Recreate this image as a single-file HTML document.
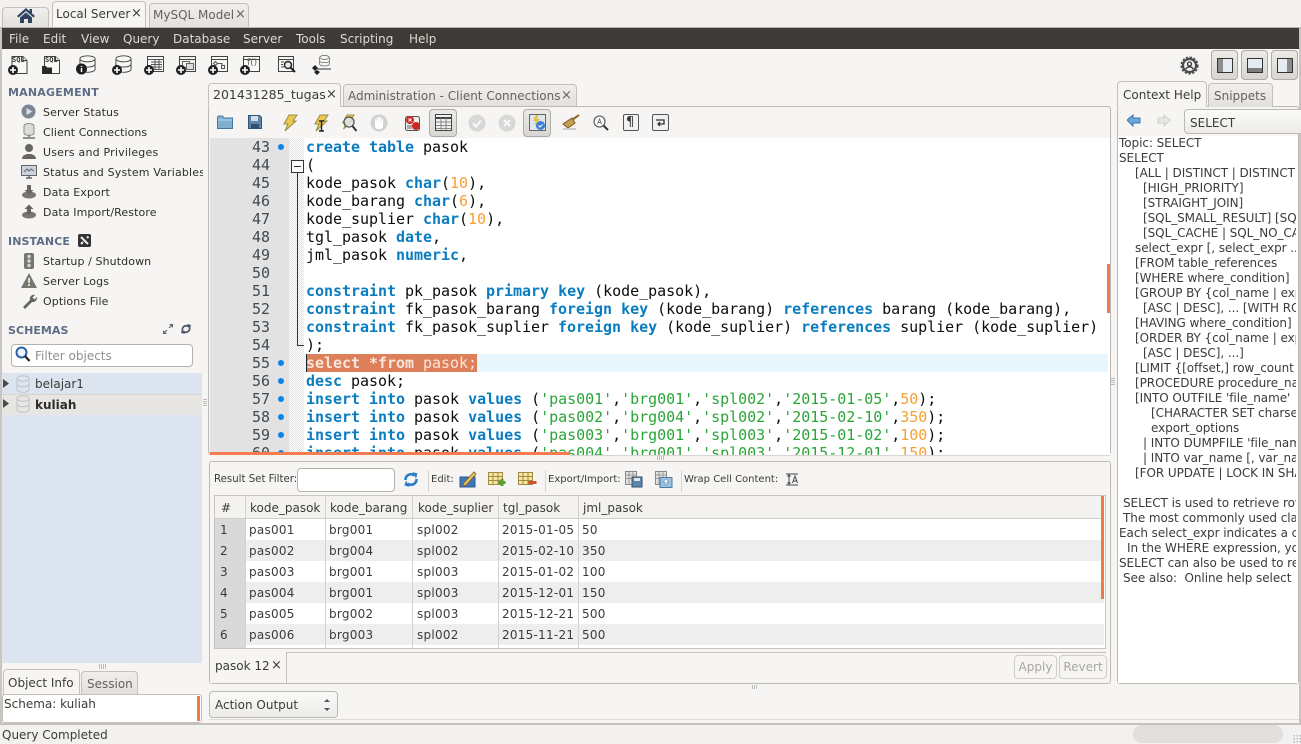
<!DOCTYPE html>
<html><head><meta charset="utf-8"><title>MySQL Workbench</title>
<style>
html,body{margin:0;padding:0;width:1301px;height:744px;overflow:hidden;background:#f2f1f0}
body{position:relative;font-family:"DejaVu Sans","Liberation Sans",sans-serif;font-size:12px;color:#3c3b37}
.a,.t,svg{position:absolute}
.t{white-space:pre;line-height:16px;height:16px}
.s{font-size:11px;letter-spacing:.1px;color:#2e2d2a;margin-top:1px}
.h{font-size:11px;font-weight:bold;color:#5d6d85}
.l{font-size:10px}
.tab{position:absolute;box-sizing:border-box;border:1px solid #c4c1bb;border-bottom:none;border-radius:4px 4px 0 0;background:linear-gradient(#f0efed,#e2e0dd)}
.tab.on{background:#f6f5f4}
.box{position:absolute;box-sizing:border-box;border:1px solid #bdbab4;border-radius:3px;background:#f6f5f4}
.tb{position:absolute;box-sizing:border-box;border:1px solid #aeaba5;border-radius:4px;background:linear-gradient(#eceae7,#d8d6d2)}
.c{position:absolute;left:306px;font:15px/18px "DejaVu Sans Mono","Liberation Mono",monospace;letter-spacing:-.03px;color:#0c0c0c;white-space:pre;height:18px}
.n{position:absolute;left:230px;width:40px;text-align:right;font:15px/18px "DejaVu Sans Mono","Liberation Mono",monospace;color:#3f4a52;height:18px}
.d{position:absolute;left:278px;width:6px;height:6px;border-radius:50%;background:#0a84e6}
.c b{color:#0a7cc0;font-weight:bold}.c i{font-style:normal;color:#f7a030}.c u{text-decoration:none;color:#2aa538}
.r{position:absolute;left:215px;width:889px;height:21px;background:#eee}
.g{position:absolute;white-space:pre;font-size:12px;color:#3c3b37;line-height:16px;letter-spacing:.25px}
.gh{letter-spacing:0}
.vl{position:absolute;width:1px;top:496px;height:152px;background:#d3d1cd}
.p{position:absolute;white-space:pre;font-size:12px;letter-spacing:-.06px;line-height:15px;height:15px;color:#3c3b37}
</style></head><body>
<svg width="0" height="0" style="position:absolute"><defs>
<symbol id="plus" viewBox="0 0 10 10"><circle cx="5" cy="5" r="5" fill="#1f1f1f"/><path d="M5 2v6M2 5h6" stroke="#fff" stroke-width="1.6"/></symbol>
<symbol id="doc" viewBox="0 0 20 20"><path d="M3.5 1.5h11l4 4v13h-15z" fill="#f8f8f6" stroke="#45443f"/><path d="M14.500 1.500v4h4" fill="#ddd" stroke="#45443f"/></symbol>
<symbol id="db" viewBox="0 0 18 20"><ellipse cx="9" cy="4" rx="8" ry="3.200" fill="#f5f5f3" stroke="#45443f"/><path d="M1 4v11c0 2 3.500 3.300 8 3.300s8-1.300 8-3.300V4M1 9.500c0 2 3.500 3.200 8 3.200s8-1.200 8-3.200" fill="none" stroke="#45443f"/></symbol>
<symbol id="bolt" viewBox="0 0 17 18"><path d="M8 1h8l-4 6h3L4 17l3-7H3z" fill="#edc84c" stroke="#9a8a4c"/></symbol>
<symbol id="cyl" viewBox="0 0 14 18"><ellipse cx="7" cy="3.500" rx="6" ry="2.800" fill="none" stroke="#bfc3c8"/><path d="M1 3.500v11c0 1.600 2.700 2.800 6 2.800s6-1.200 6-2.800v-11M1 9c0 1.600 2.700 2.800 6 2.800S13 10.600 13 9" fill="none" stroke="#bfc3c8"/></symbol>
</defs></svg>

<!-- top tabs -->
<div class="tab" style="left:2px;top:7px;width:47px;height:21px"></div>
<svg style="left:16px;top:7px" width="20" height="17" viewBox="0 0 20 17"><path d="M10 1L1 9l1.500 1.500L10 4l7.500 6.500L19 9l-3-2.600V2h-2.500v2.200z" fill="#2f4460"/><path d="M4 10.500L10 5.500l6 5V16h-4v-4H8v4H4z" fill="#2f4460"/></svg>
<div class="tab on" style="left:52px;top:1px;width:94px;height:27px"></div>
<div class="t" style="left:56px;top:6px;font-size:12px">Local Server</div>
<div class="t" style="left:131px;top:6px;font-size:13px">×</div>
<div class="tab" style="left:149px;top:3px;width:100px;height:25px"></div>
<div class="t" style="left:153px;top:7px;font-size:12px;color:#64625e">MySQL Model</div>
<div class="t" style="left:235px;top:7px;font-size:13px;color:#64625e">×</div>

<!-- menu -->
<div class="a" style="left:0;top:27px;width:1301px;height:1px;background:#b8b5b0"></div>
<div class="a" style="left:2px;top:28px;width:1297px;height:21px;background:#3c3b37"></div>
<div class="a" style="left:0;top:28px;width:2px;height:716px;background:#c9c6c1"></div>
<div class="a" style="left:1299px;top:28px;width:2px;height:697px;background:#c9c6c1"></div>
<div class="a" style="left:2px;top:49px;width:1297px;height:675px;background:#f6f5f4"></div>
<div class="t" style="left:9px;top:31px;color:#dfdbd2">File</div>
<div class="t" style="left:43px;top:31px;color:#dfdbd2">Edit</div>
<div class="t" style="left:81px;top:31px;color:#dfdbd2">View</div>
<div class="t" style="left:123px;top:31px;color:#dfdbd2">Query</div>
<div class="t" style="left:173px;top:31px;color:#dfdbd2">Database</div>
<div class="t" style="left:243px;top:31px;color:#dfdbd2">Server</div>
<div class="t" style="left:296px;top:31px;color:#dfdbd2">Tools</div>
<div class="t" style="left:340px;top:31px;color:#dfdbd2">Scripting</div>
<div class="t" style="left:409px;top:31px;color:#dfdbd2">Help</div>

<!-- main toolbar -->
<svg style="left:8px;top:55px" width="21" height="20"><use href="#doc" width="21" height="20"/><use href="#plus" x="0" y="10" width="10" height="10"/></svg>
<div class="t" style="left:12px;top:56px;height:8px;font:bold 7px/8px 'DejaVu Sans Mono',monospace;color:#333">SQL</div>
<svg style="left:41px;top:55px" width="20" height="20"><use href="#doc" width="20" height="20"/><path d="M1 11h4l1 1.500h5V19H1z" fill="#2a2a28"/></svg>
<div class="t" style="left:45px;top:56px;height:8px;font:bold 7px/8px 'DejaVu Sans Mono',monospace;color:#333">SQL</div>
<svg style="left:76px;top:55px" width="20" height="20"><use href="#db" x="3" width="17" height="19"/><circle cx="5.500" cy="14" r="5.500" fill="#1f1f1f"/><path d="M5.500 11v1M5.500 13v4" stroke="#fff" stroke-width="1.500"/></svg>
<svg style="left:112px;top:55px" width="20" height="20"><use href="#db" x="3" width="17" height="19"/><use href="#plus" y="10" width="10" height="10"/></svg>
<svg style="left:144px;top:55px" width="20" height="20"><rect x="3.500" y="1.500" width="16" height="15" fill="#f8f8f6" stroke="#45443f"/><path d="M3.500 4.500h16M7 7h11M7 9.500h11M7 12h11M7 14.500h11M11 5v10M15 5v10" stroke="#555" fill="none"/><use href="#plus" y="10" width="10" height="10"/></svg>
<svg style="left:176px;top:55px" width="20" height="20"><rect x="3.500" y="1.500" width="16" height="15" fill="#f0f0ee" stroke="#45443f"/><path d="M3.500 4.500h16" stroke="#45443f"/><rect x="6.500" y="6.500" width="7" height="6" fill="none" stroke="#666"/><rect x="10.500" y="8.500" width="7" height="6" fill="#ddd" stroke="#666"/><use href="#plus" y="10" width="10" height="10"/></svg>
<svg style="left:208px;top:55px" width="20" height="20"><rect x="3.500" y="1.500" width="16" height="15" fill="#f8f8f6" stroke="#45443f"/><path d="M3.500 4.500h16" stroke="#45443f"/><path d="M7.500 6.500l2 2-2 2-2-2zM13.500 10.500h3v3h-3zM10 8.500h4v2" fill="none" stroke="#555"/><use href="#plus" y="10" width="10" height="10"/></svg>
<svg style="left:240px;top:55px" width="20" height="20"><rect x="3.500" y="1.500" width="16" height="15" fill="#f8f8f6" stroke="#45443f"/><path d="M3.500 4.500h16" stroke="#45443f"/><use href="#plus" y="10" width="10" height="10"/></svg>
<div class="t" style="left:247px;top:57px;font-size:9px;line-height:12px;color:#666">f()</div>
<svg style="left:277px;top:55px" width="20" height="20"><rect x="1.500" y="1.500" width="15" height="15" fill="#f8f8f6" stroke="#45443f"/><path d="M1.500 4.500h15M4 7h3M4 9.500h2M4 12h3" stroke="#45443f"/><circle cx="11" cy="10" r="3.500" fill="#dfe8f2" stroke="#222" stroke-width="1.500"/><path d="M13.500 12.500L18 17" stroke="#222" stroke-width="2"/></svg>
<svg style="left:311px;top:55px" width="21" height="20"><use href="#db" x="8" width="11" height="12"/><path d="M6 14h14" stroke="#333"/><path d="M1 13l3-3 3 3-3 3zM6 15l3 2-3 3-3-3z" fill="#222"/></svg>

<!-- right top icons -->
<svg style="left:1180px;top:56px" width="19" height="19" viewBox="0 0 19 19"><circle cx="9.500" cy="9.500" r="7.600" fill="#4a4a48"/><circle cx="9.500" cy="9.500" r="8.300" fill="none" stroke="#4a4a48" stroke-width="1.500" stroke-dasharray="2.400 1.500"/><circle cx="9.500" cy="9.500" r="5.400" fill="#f2f1f0"/><circle cx="9.500" cy="8" r="2" fill="none" stroke="#333" stroke-width="1.300"/><path d="M5.800 13.200c.8-1.800 2.300-2.400 3.700-2.400s2.900.6 3.700 2.400" fill="none" stroke="#333" stroke-width="1.300"/></svg>
<div class="tb" style="left:1211px;top:50px;width:27px;height:30px"></div>
<svg style="left:1217px;top:58px" width="16" height="15"><rect x=".5" y=".5" width="15" height="14" fill="#e6ebf2" stroke="#333"/><rect x="1" y="1" width="5" height="13" fill="#8d8d8b"/></svg>
<div class="tb" style="left:1241px;top:50px;width:27px;height:30px"></div>
<svg style="left:1247px;top:58px" width="16" height="15"><rect x=".5" y=".5" width="15" height="14" fill="#e6ebf2" stroke="#333"/><rect x="1" y="10" width="14" height="4" fill="#7d7d7b"/></svg>
<div class="tb" style="left:1271px;top:50px;width:27px;height:30px"></div>
<svg style="left:1277px;top:58px" width="16" height="15"><rect x=".5" y=".5" width="15" height="14" fill="#e6ebf2" stroke="#333"/><rect x="10" y="1" width="5" height="13" fill="#8d8d8b"/></svg>

<!-- sidebar -->
<div class="t h" style="left:8px;top:85px;letter-spacing:.2px">MANAGEMENT</div>
<svg style="left:21px;top:104px" width="15" height="15"><circle cx="7.500" cy="7.500" r="7" fill="#7b8794"/><path d="M5.500 4v7l6-3.500z" fill="#d9dee3"/></svg>
<div class="t s" style="left:43px;top:104px">Server Status</div>
<svg style="left:22px;top:123px" width="14" height="17"><ellipse cx="7" cy="3" rx="5" ry="2.500" fill="#dcdcda" stroke="#8a8a88"/><path d="M2 3v7c0 1.400 2.200 2.400 5 2.400s5-1 5-2.400V3" fill="#dcdcda" stroke="#8a8a88"/><path d="M7 12v2M1 15h12" stroke="#6e6e6c" stroke-width="1.500"/></svg>
<div class="t s" style="left:43px;top:124px;letter-spacing:.05px">Client Connections</div>
<svg style="left:21px;top:143px" width="16" height="16"><circle cx="8" cy="5" r="4" fill="#66655f"/><path d="M1 16c0-3 2-4 5-5h4c3 1 5 2 5 5z" fill="#66655f"/></svg>
<div class="t s" style="left:43px;top:144px;letter-spacing:.2px">Users and Privileges</div>
<svg style="left:21px;top:165px" width="16" height="14"><rect x=".5" y=".5" width="15" height="10" fill="#c9d3df" stroke="#666"/><path d="M3 7l3-3 2 2 2-2 3 2" fill="none" stroke="#666"/><path d="M5 13h6M8 10v3" stroke="#666" stroke-width="1.500"/></svg>
<div class="t s" style="left:43px;top:164px;width:160px;overflow:hidden;letter-spacing:.17px">Status and System Variables</div>
<svg style="left:21px;top:184px" width="16" height="15"><ellipse cx="8" cy="11" rx="7" ry="3.500" fill="#77766f"/><path d="M6 1h4v5h2.500L8 10.500 3.500 6H6z" fill="#66655f"/></svg>
<div class="t s" style="left:43px;top:184px">Data Export</div>
<svg style="left:21px;top:204px" width="16" height="15"><ellipse cx="8" cy="11" rx="7" ry="3.500" fill="#77766f"/><path d="M6 10V5H3.500L8 .5 12.500 5H10v5z" fill="#66655f"/></svg>
<div class="t s" style="left:43px;top:204px">Data Import/Restore</div>

<div class="t h" style="left:8px;top:234px;letter-spacing:.1px">INSTANCE</div>
<svg style="left:78px;top:234px" width="13" height="13"><rect width="13" height="13" rx="2" fill="#333"/><path d="M3 3l7 7M9 2.500l1.500 1.500M3 10l2-2" stroke="#eee" stroke-width="2"/></svg>
<svg style="left:24px;top:253px" width="10" height="16"><rect width="10" height="16" rx="2" fill="#77766f"/><circle cx="5" cy="3.500" r="1.700" fill="#d6d6d4"/><circle cx="5" cy="8" r="1.700" fill="#d6d6d4"/><circle cx="5" cy="12.500" r="1.700" fill="#d6d6d4"/></svg>
<div class="t s" style="left:43px;top:253px">Startup / Shutdown</div>
<svg style="left:21px;top:273px" width="16" height="15"><path d="M8 0l8 15H0z" fill="#77766f"/><path d="M8 5v5M8 11v2" stroke="#f4f4f2" stroke-width="1.700"/></svg>
<div class="t s" style="left:43px;top:273px">Server Logs</div>
<svg style="left:21px;top:293px" width="16" height="16"><path d="M2 14l7-7c-1-3 2-6 5-5l-2.500 2.500 2 2L16 4c.5 3-2 5.500-5 5l-7 7z" fill="#66655f"/></svg>
<div class="t s" style="left:43px;top:293px">Options File</div>

<div class="t h" style="left:8px;top:323px;letter-spacing:.05px">SCHEMAS</div>
<svg style="left:163px;top:324px" width="10" height="10"><path d="M1 9l3-3M9 1L6 4" stroke="#667" stroke-width="1.200"/><path d="M0 10V6l4 4zM10 0v4L6 0z" fill="#667"/></svg>
<svg style="left:180px;top:324px" width="12" height="10"><path d="M2.500 6.500A3.800 3.800 0 0 1 9 3M9.500 3.500A3.800 3.800 0 0 1 3 7" fill="none" stroke="#4d5a6a" stroke-width="1.800"/><path d="M7 0l4 1-1 4zM5 10L1 9l1-4z" fill="#4d5a6a"/></svg>
<div class="a" style="left:11px;top:344px;width:182px;height:23px;box-sizing:border-box;background:#fff;border:1px solid #b5b2ac;border-radius:4px"></div>
<svg style="left:15px;top:346px" width="16" height="17"><circle cx="6.500" cy="6.500" r="5" fill="#eef3f9" stroke="#2b5ea8" stroke-width="2"/><path d="M10 10l4.500 5" stroke="#222" stroke-width="2.200"/></svg>
<div class="t" style="left:35px;top:348px;font-size:12px;color:#909090">Filter objects</div>

<div class="a" style="left:2px;top:373px;width:200px;height:290px;background:#dbe4ef"></div>
<div class="a" style="left:2px;top:394px;width:200px;height:21px;background:#e8e6e3;border-top:1px solid #d6d4d0;box-sizing:border-box"></div>
<svg style="left:3px;top:379px" width="7" height="9"><path d="M0 0l6 4.500L0 9z" fill="#4a4a48"/></svg>
<svg style="left:3px;top:399px" width="7" height="9"><path d="M0 0l6 4.500L0 9z" fill="#4a4a48"/></svg>
<svg style="left:16px;top:375px" width="14" height="18"><use href="#cyl" width="14" height="18"/></svg>
<svg style="left:16px;top:395px" width="14" height="18"><use href="#cyl" width="14" height="18"/></svg>
<div class="t" style="left:35px;top:376px;font-size:12px">belajar1</div>
<div class="t" style="left:35px;top:397px;font-size:12px;font-weight:bold;color:#2e2d2a">kuliah</div>
<div class="a" style="left:203px;top:399px;width:4px;height:8px;background:repeating-linear-gradient(#bbb 0 1px,transparent 1px 2px)"></div>
<div class="a" style="left:99px;top:664px;width:8px;height:5px;background:repeating-linear-gradient(90deg,#bbb 0 1px,transparent 1px 2px)"></div>

<div class="tab on" style="left:3px;top:669px;width:77px;height:26px"></div>
<div class="t" style="left:8px;top:675px;font-size:12px">Object Info</div>
<div class="tab" style="left:81px;top:671px;width:57px;height:24px"></div>
<div class="t" style="left:87px;top:676px;font-size:12px;color:#64625e">Session</div>
<div class="a" style="left:2px;top:694px;width:200px;height:29px;box-sizing:border-box;background:#fff;border:1px solid #c4c1bb;border-radius:3px"></div>
<div class="a" style="left:197px;top:696px;width:3px;height:25px;background:#ee7a45"></div>
<div class="t" style="left:4px;top:696px;font-size:12px">Schema: kuliah</div>

<!-- main tabs -->
<div class="box" style="left:208px;top:106px;width:903px;height:349px;border-radius:3px"></div>
<div class="tab on" style="left:208px;top:83px;width:133px;height:24px;border-bottom:1px solid #f6f5f4"></div>
<div class="t" style="left:213px;top:87px;font-size:12.500px">201431285_tugas</div>
<div class="t" style="left:326px;top:87px;font-size:13px">×</div>
<div class="tab" style="left:343px;top:84px;width:234px;height:22px"></div>
<div class="t" style="left:348px;top:88px;font-size:12px;color:#64625e">Administration - Client Connections</div>
<div class="t" style="left:561px;top:88px;font-size:13px;color:#64625e">×</div>

<!-- editor toolbar -->
<svg style="left:217px;top:115px" width="16" height="14"><path d="M.5 13.500V2l1-1h4l1.500 2h8.500v10.500z" fill="#7fb0d0" stroke="#47769a"/><path d="M1 5h14" stroke="#b8d6e8"/></svg>
<svg style="left:248px;top:115px" width="14" height="14"><path d="M.5.5h11l2 2v11H.5z" fill="#5f86a8" stroke="#2f5370"/><rect x="3" y="1" width="7" height="5" fill="#cfdeea"/><rect x="3" y="9" width="8" height="4.500" fill="#2f5370"/></svg>
<svg style="left:281px;top:114px" width="17" height="18"><use href="#bolt" width="17" height="18"/></svg>
<svg style="left:312px;top:114px" width="17" height="18"><use href="#bolt" width="17" height="18"/><path d="M7 7h5M7 17h5M9.500 7v10" stroke="#222" stroke-width="1.400"/></svg>
<svg style="left:340px;top:114px" width="18" height="18"><use href="#bolt" width="15" height="16"/><circle cx="9" cy="8" r="5" fill="#dfe8f2" fill-opacity=".8" stroke="#555" stroke-width="1.300"/><path d="M12.500 12l4 5" stroke="#333" stroke-width="2"/></svg>
<svg style="left:370px;top:114px" width="18" height="18"><circle cx="9" cy="9" r="8.500" fill="#d2d1cf"/><rect x="5" y="7.500" width="8" height="7.500" rx="3" fill="#fff"/><path d="M5.800 9V5.500M8 8.500V3.800M10.200 8.500V3.800M12.300 9V5.500" stroke="#fff" stroke-width="1.700" stroke-linecap="round"/></svg>
<svg style="left:404px;top:114px" width="17" height="18"><rect x="1.500" y="2.500" width="14" height="14" rx="2" fill="#eee" stroke="#555"/><circle cx="6" cy="6" r="4" fill="#cc2727"/><path d="M4.500 4.500l3 3M7.500 4.500l-3 3" stroke="#fff"/><circle cx="12" cy="12" r="4" fill="#cc2727"/><path d="M3 12h5M3 14h5" stroke="#666"/></svg>
<div class="tb" style="left:429px;top:109px;width:28px;height:28px"></div>
<svg style="left:435px;top:114px" width="17" height="17"><rect x=".5" y=".5" width="16" height="16" fill="#eef0f2" stroke="#444"/><path d="M.5 4h16" stroke="#444" stroke-width="2"/><path d="M1 8h15M1 11.500h15M1 14.500h15M6 4v12M11 4v12" stroke="#888"/></svg>
<svg style="left:468px;top:114px" width="18" height="18"><circle cx="9" cy="9" r="8.500" fill="#d9d8d6"/><path d="M5 9.500l3 3 5-6" fill="none" stroke="#f8f8f8" stroke-width="2.200"/></svg>
<svg style="left:498px;top:114px" width="18" height="18"><circle cx="9" cy="9" r="8.500" fill="#d9d8d6"/><path d="M6 6l6 6M12 6l-6 6" stroke="#f8f8f8" stroke-width="2.200"/></svg>
<div class="tb" style="left:523px;top:109px;width:28px;height:28px"></div>
<svg style="left:529px;top:114px" width="17" height="17"><rect x=".5" y=".5" width="16" height="16" fill="#dfe5ea" stroke="#666"/><path d="M7 1L4 7h3L5 12l6-7H8l1-4z" fill="#e6c040"/><circle cx="11.500" cy="11.500" r="4.500" fill="#3f7fd0"/><path d="M9.500 11.500l1.500 1.500 2.500-2.500" fill="none" stroke="#fff"/></svg>
<svg style="left:562px;top:114px" width="18" height="17"><path d="M17 1l-7 5" stroke="#8a6a30" stroke-width="2"/><path d="M10 4l3 5-7 5-5-4z" fill="#c8a050" stroke="#7a5a20"/><path d="M1 15h13" stroke="#ccc" stroke-width="2"/></svg>
<svg style="left:593px;top:115px" width="16" height="16"><circle cx="6.500" cy="6.500" r="5.500" fill="#fff" stroke="#666" stroke-width="1.300"/><path d="M10.500 10.500L15 15" stroke="#333" stroke-width="2"/><path d="M4.500 9l2-5 2 5M5 7.500h3" fill="none" stroke="#777"/></svg>
<div class="tb" style="left:623px;top:114px;width:16px;height:17px;border-color:#555;border-radius:2px;background:#f2f1f0"></div>
<div class="t" style="left:626px;top:115px;font-size:13px;color:#333">¶</div>
<div class="tb" style="left:652px;top:114px;width:17px;height:17px;border-color:#555;border-radius:2px;background:#f2f1f0"></div>
<svg style="left:655px;top:117px" width="11" height="11"><path d="M1 3h8v4H3M5 5L3 7l2 2" fill="none" stroke="#333" stroke-width="1.300"/></svg>

<!-- code -->
<div class="a" style="left:210px;top:138px;width:900px;height:317px;background:#fff"></div>
<div class="a" style="left:210px;top:138px;width:79px;height:317px;background:#e2e2e2"></div>
<div class="a" style="left:289px;top:138px;width:15px;height:317px;background:repeating-conic-gradient(#e2e2e2 0 25%,#fff 0 50%) 0 0/2px 2px"></div>
<div class="a" style="left:304px;top:354px;width:804px;height:18px;background:#e8f6fd"></div>
<div class="a" style="left:306px;top:354px;width:171px;height:18px;background:#dd8059"></div>
<div class="a" style="left:306px;top:354px;width:1px;height:18px;background:#222"></div>
<div class="a" style="left:297px;top:172px;width:1px;height:173px;background:#333"></div>
<div class="a" style="left:297px;top:345px;width:7px;height:1px;background:#333"></div>
<div class="a" style="left:291px;top:160px;width:13px;height:13px;box-sizing:border-box;border:1px solid #333;background:#fff"></div>
<div class="a" style="left:294px;top:166px;width:7px;height:1px;background:#333"></div>
<div class="a" style="left:1107px;top:264px;width:3px;height:49px;background:#ee7a45"></div>

<div class="n" style="top:138px">43</div><div class="d" style="top:144px"></div>
<div class="n" style="top:156px">44</div>
<div class="n" style="top:174px">45</div>
<div class="n" style="top:192px">46</div>
<div class="n" style="top:210px">47</div>
<div class="n" style="top:228px">48</div>
<div class="n" style="top:246px">49</div>
<div class="n" style="top:264px">50</div>
<div class="n" style="top:282px">51</div>
<div class="n" style="top:300px">52</div>
<div class="n" style="top:318px">53</div>
<div class="n" style="top:336px">54</div>
<div class="n" style="top:354px">55</div><div class="d" style="top:360px"></div>
<div class="n" style="top:372px">56</div><div class="d" style="top:378px"></div>
<div class="n" style="top:390px">57</div><div class="d" style="top:396px"></div>
<div class="n" style="top:408px">58</div><div class="d" style="top:414px"></div>
<div class="n" style="top:426px">59</div><div class="d" style="top:432px"></div>
<div class="n" style="top:444px">60</div><div class="d" style="top:450px"></div>

<div class="c" style="top:138px"><b>create</b> <b>table</b> pasok</div>
<div class="c" style="top:156px">(</div>
<div class="c" style="top:174px">kode_pasok <b>char</b>(<i>10</i>),</div>
<div class="c" style="top:192px">kode_barang <b>char</b>(<i>6</i>),</div>
<div class="c" style="top:210px">kode_suplier <b>char</b>(<i>10</i>),</div>
<div class="c" style="top:228px">tgl_pasok <b>date</b>,</div>
<div class="c" style="top:246px">jml_pasok <b>numeric</b>,</div>
<div class="c" style="top:282px"><b>constraint</b> pk_pasok <b>primary</b> <b>key</b> (kode_pasok),</div>
<div class="c" style="top:300px"><b>constraint</b> fk_pasok_barang <b>foreign</b> <b>key</b> (kode_barang) <b>references</b> barang (kode_barang),</div>
<div class="c" style="top:318px"><b>constraint</b> fk_pasok_suplier <b>foreign</b> <b>key</b> (kode_suplier) <b>references</b> suplier (kode_suplier)</div>
<div class="c" style="top:336px">);</div>
<div class="c" style="top:354px;color:#f7e6de"><span style="font-weight:bold">select *from</span> pasok;</div>
<div class="c" style="top:372px"><b>desc</b> pasok;</div>
<div class="c" style="top:390px"><b>insert</b> <b>into</b> pasok <b>values</b> (<u>'pas001'</u>,<u>'brg001'</u>,<u>'spl002'</u>,<u>'2015-01-05'</u>,<i>50</i>);</div>
<div class="c" style="top:408px"><b>insert</b> <b>into</b> pasok <b>values</b> (<u>'pas002'</u>,<u>'brg004'</u>,<u>'spl002'</u>,<u>'2015-02-10'</u>,<i>350</i>);</div>
<div class="c" style="top:426px"><b>insert</b> <b>into</b> pasok <b>values</b> (<u>'pas003'</u>,<u>'brg001'</u>,<u>'spl003'</u>,<u>'2015-01-02'</u>,<i>100</i>);</div>
<div class="c" style="top:444px"><b>insert</b> <b>into</b> pasok <b>values</b> (<u>'pas004'</u>,<u>'brg001'</u>,<u>'spl003'</u>,<u>'2015-12-01'</u>,<i>150</i>);</div>

<div class="a" style="left:209px;top:455px;width:902px;height:6px;background:#f6f5f4"></div>
<div class="a" style="left:210px;top:452px;width:360px;height:3px;background:#f47c4e"></div>
<div class="a" style="left:570px;top:455px;width:540px;height:1px;background:#d8d6d2"></div>
<div class="a" style="left:1111px;top:378px;width:4px;height:8px;background:repeating-linear-gradient(#bbb 0 1px,transparent 1px 2px)"></div>
<div class="a" style="left:657px;top:456px;width:8px;height:4px;background:repeating-linear-gradient(90deg,#bbb 0 1px,transparent 1px 2px)"></div>

<!-- results -->
<div class="box" style="left:209px;top:461px;width:902px;height:223px"></div>
<div class="t l" style="left:214px;top:472px;font-size:10.200px">Result Set Filter:</div>
<div class="a" style="left:297px;top:468px;width:98px;height:24px;box-sizing:border-box;background:#fff;border:1px solid #b5b2ac;border-radius:4px"></div>
<svg style="left:403px;top:472px" width="16" height="15" viewBox="0 0 16 15"><path d="M2.500 8A5.500 5.500 0 0 1 11.500 3.500" fill="none" stroke="#2a7cc7" stroke-width="2.600"/><path d="M13.500 7A5.500 5.500 0 0 1 4.500 11.500" fill="none" stroke="#2a7cc7" stroke-width="2.600"/><path d="M9.500 0l5 1.500-1.500 5zM6.500 15l-5-1.500 1.500-5z" fill="#2a7cc7"/></svg>
<div class="a" style="left:428px;top:470px;width:1px;height:22px;background:#d6d4d0"></div>
<div class="t l" style="left:431px;top:472px">Edit:</div>
<svg style="left:459px;top:470px" width="18" height="18"><rect x="1" y="7" width="15" height="10" fill="#3f78b8" stroke="#2c5a90"/><path d="M5 13L15 2l2 2L7 15l-3 1z" fill="#f0d070" stroke="#9a6a20"/></svg>
<svg style="left:488px;top:472px" width="19" height="15"><rect x=".5" y=".5" width="14" height="12" fill="#f6e6a0" stroke="#a08a40"/><path d="M.5 4.500h14M.5 8.500h14M5 1v11M10 1v11" stroke="#a08a40"/><path d="M14 7v7M10.500 10.500h7" stroke="#5aa030" stroke-width="3"/></svg>
<svg style="left:518px;top:472px" width="19" height="15"><rect x=".5" y=".5" width="14" height="12" fill="#f6e6a0" stroke="#a08a40"/><path d="M.5 4.500h14M.5 8.500h14M5 1v11M10 1v11" stroke="#a08a40"/><path d="M10.500 10.500h8" stroke="#d05030" stroke-width="3"/></svg>
<div class="a" style="left:545px;top:470px;width:1px;height:22px;background:#d6d4d0"></div>
<div class="t l" style="left:548px;top:472px">Export/Import:</div>
<svg style="left:625px;top:471px" width="18" height="17"><rect x=".5" y=".5" width="11" height="13" fill="#e4e4e2" stroke="#888"/><path d="M.5 4h11M.5 7.500h11M4 1v12M8 1v12" stroke="#999"/><rect x="7" y="6" width="10" height="10" fill="#5f86a8" stroke="#2f5370"/><rect x="9" y="7" width="6" height="3" fill="#dce6ee"/></svg>
<svg style="left:655px;top:471px" width="18" height="17"><rect x=".5" y=".5" width="11" height="13" fill="#e4e4e2" stroke="#888"/><path d="M.5 4h11M.5 7.500h11M4 1v12M8 1v12" stroke="#999"/><rect x="5" y="6.500" width="12" height="10" fill="#9cc0dc" stroke="#4a7ea8"/><path d="M11 8l3 3h-2v3h-2v-3H8z" fill="#eef5fa" stroke="#4a7ea8" stroke-width=".5"/></svg>
<div class="a" style="left:681px;top:470px;width:1px;height:22px;background:#d6d4d0"></div>
<div class="t l" style="left:684px;top:472px">Wrap Cell Content:</div>
<svg style="left:786px;top:473px" width="12" height="13"><path d="M0 1h12M0 12h12" stroke="#444"/><path d="M3 2v9M1.500 3.500L3 2l1.500 1.500M1.500 9.500L3 11l1.500-1.500" fill="none" stroke="#444"/><path d="M6.500 10L9 3l2.500 7M7.500 8h3" fill="none" stroke="#444"/></svg>

<div class="a" style="left:214px;top:495px;width:892px;height:154px;box-sizing:border-box;background:#fff;border:1px solid #c8c5c0"></div>
<div class="a" style="left:215px;top:496px;width:889px;height:23px;background:#f3f2f0;border-bottom:1px solid #cfcdc9;box-sizing:border-box"></div>
<div class="r" style="top:540px"></div>
<div class="r" style="top:582px"></div>
<div class="r" style="top:624px"></div>
<div class="a" style="left:215px;top:519px;width:30px;height:129px;background:#d9d9d9"></div>
<div class="vl" style="left:245px"></div><div class="vl" style="left:325px"></div><div class="vl" style="left:412px"></div><div class="vl" style="left:498px"></div><div class="vl" style="left:578px"></div>
<div class="a" style="left:1101px;top:496px;width:3px;height:103px;background:#ee7a45"></div>

<div class="g gh" style="left:221px;top:500px">#</div><div class="g gh" style="left:250px;top:500px">kode_pasok</div><div class="g gh" style="left:330px;top:500px">kode_barang</div><div class="g gh" style="left:418px;top:500px">kode_suplier</div><div class="g gh" style="left:503px;top:500px">tgl_pasok</div><div class="g gh" style="left:583px;top:500px">jml_pasok</div>
<div class="g" style="left:220px;top:522px">1</div><div class="g" style="left:249px;top:522px">pas001</div><div class="g" style="left:329px;top:522px">brg001</div><div class="g" style="left:417px;top:522px">spl002</div><div class="g" style="left:502px;top:522px">2015-01-05</div><div class="g" style="left:582px;top:522px">50</div>
<div class="g" style="left:220px;top:543px">2</div><div class="g" style="left:249px;top:543px">pas002</div><div class="g" style="left:329px;top:543px">brg004</div><div class="g" style="left:417px;top:543px">spl002</div><div class="g" style="left:502px;top:543px">2015-02-10</div><div class="g" style="left:582px;top:543px">350</div>
<div class="g" style="left:220px;top:564px">3</div><div class="g" style="left:249px;top:564px">pas003</div><div class="g" style="left:329px;top:564px">brg001</div><div class="g" style="left:417px;top:564px">spl003</div><div class="g" style="left:502px;top:564px">2015-01-02</div><div class="g" style="left:582px;top:564px">100</div>
<div class="g" style="left:220px;top:585px">4</div><div class="g" style="left:249px;top:585px">pas004</div><div class="g" style="left:329px;top:585px">brg001</div><div class="g" style="left:417px;top:585px">spl003</div><div class="g" style="left:502px;top:585px">2015-12-01</div><div class="g" style="left:582px;top:585px">150</div>
<div class="g" style="left:220px;top:606px">5</div><div class="g" style="left:249px;top:606px">pas005</div><div class="g" style="left:329px;top:606px">brg002</div><div class="g" style="left:417px;top:606px">spl003</div><div class="g" style="left:502px;top:606px">2015-12-21</div><div class="g" style="left:582px;top:606px">500</div>
<div class="g" style="left:220px;top:627px">6</div><div class="g" style="left:249px;top:627px">pas006</div><div class="g" style="left:329px;top:627px">brg003</div><div class="g" style="left:417px;top:627px">spl002</div><div class="g" style="left:502px;top:627px">2015-11-21</div><div class="g" style="left:582px;top:627px">500</div>

<div class="a" style="left:210px;top:652px;width:77px;height:31px;background:#f6f5f4;border-right:1px solid #c4c1bb;box-sizing:border-box"></div>
<div class="a" style="left:286px;top:652px;width:820px;height:1px;background:#c4c1bb"></div>
<div class="t" style="left:215px;top:658px;font-size:12px">pasok 12</div>
<div class="t" style="left:271px;top:658px;font-size:13px">×</div>
<div class="box" style="left:1014px;top:655px;width:43px;height:24px;border-color:#d0cec9;color:#a9a7a3;text-align:center;line-height:22px;border-radius:4px">Apply</div>
<div class="box" style="left:1059px;top:655px;width:48px;height:24px;border-color:#d0cec9;color:#a9a7a3;text-align:center;line-height:22px;border-radius:4px">Revert</div>

<div class="a" style="left:209px;top:691px;width:129px;height:27px;box-sizing:border-box;border:1px solid #bdbab4;border-radius:4px;background:linear-gradient(#fafaf9,#ecebe9)"></div>
<div class="t" style="left:215px;top:697px;font-size:12px">Action Output</div>
<svg style="left:323px;top:699px" width="8" height="12"><path d="M4 0l3 3H1zM4 12L1 9h6z" fill="#555"/></svg>
<div class="a" style="left:209px;top:719px;width:1090px;height:1px;background:#dedcd8"></div>
<div class="a" style="left:752px;top:685px;width:6px;height:4px;background:repeating-linear-gradient(90deg,#bbb 0 1px,transparent 1px 2px)"></div>

<!-- right panel -->
<div class="box" style="left:1117px;top:106px;width:182px;height:578px;background:#f6f5f4"></div>
<div class="tab on" style="left:1117px;top:81px;width:90px;height:26px;border-bottom:1px solid #f6f5f4"></div>
<div class="t" style="left:1123px;top:87px;font-size:12px">Context Help</div>
<div class="tab" style="left:1208px;top:83px;width:65px;height:24px"></div>
<div class="t" style="left:1214px;top:88px;font-size:12px;color:#64625e">Snippets</div>
<svg style="left:1127px;top:114px" width="14" height="13"><path d="M0 6l6-5v3h7v5H6v3z" fill="#6aa8dc" stroke="#3a78b0"/></svg>
<svg style="left:1157px;top:114px" width="14" height="13"><path d="M13 6L7 1v3H1v5h6v3z" fill="#e6e6e4" stroke="#cfcfcd"/></svg>
<div class="a" style="left:1184px;top:109px;width:130px;height:25px;box-sizing:border-box;border:1px solid #bdbab4;border-radius:4px;background:linear-gradient(#fafaf9,#ecebe9)"></div>
<div class="t" style="left:1190px;top:115px;font-size:12px">SELECT</div>
<div class="a" style="left:1118px;top:136px;width:180px;height:547px;background:#fff"></div>
<div class="a" style="left:1118px;top:136px;width:178px;height:547px;overflow:hidden">
<div class="p" style="left:1px;top:0">Topic: SELECT</div>
<div class="p" style="left:1px;top:15px">SELECT</div>
<div class="p" style="left:17px;top:30px">[ALL | DISTINCT | DISTINCTROW ]</div>
<div class="p" style="left:25px;top:45px">[HIGH_PRIORITY]</div>
<div class="p" style="left:25px;top:60px">[STRAIGHT_JOIN]</div>
<div class="p" style="left:25px;top:75px">[SQL_SMALL_RESULT] [SQL_BIG_RESULT]</div>
<div class="p" style="left:25px;top:90px">[SQL_CACHE | SQL_NO_CACHE]</div>
<div class="p" style="left:17px;top:105px">select_expr [, select_expr ...]</div>
<div class="p" style="left:17px;top:120px">[FROM table_references</div>
<div class="p" style="left:17px;top:135px">[WHERE where_condition]</div>
<div class="p" style="left:17px;top:150px">[GROUP BY {col_name | expr | position}</div>
<div class="p" style="left:25px;top:165px">[ASC | DESC], ... [WITH ROLLUP]]</div>
<div class="p" style="left:17px;top:180px">[HAVING where_condition]</div>
<div class="p" style="left:17px;top:195px">[ORDER BY {col_name | expr | position}</div>
<div class="p" style="left:25px;top:210px">[ASC | DESC], ...]</div>
<div class="p" style="left:17px;top:225px">[LIMIT {[offset,] row_count | row_count}]</div>
<div class="p" style="left:17px;top:240px">[PROCEDURE procedure_name(args)]</div>
<div class="p" style="left:17px;top:255px">[INTO OUTFILE 'file_name'</div>
<div class="p" style="left:33px;top:270px">[CHARACTER SET charset_name]</div>
<div class="p" style="left:33px;top:285px">export_options</div>
<div class="p" style="left:25px;top:300px">| INTO DUMPFILE 'file_name'</div>
<div class="p" style="left:25px;top:315px">| INTO var_name [, var_name]]</div>
<div class="p" style="left:17px;top:330px">[FOR UPDATE | LOCK IN SHARE MODE]]</div>
<div class="p" style="left:5px;top:360px">SELECT is used to retrieve rows selected</div>
<div class="p" style="left:5px;top:375px">The most commonly used clauses of</div>
<div class="p" style="left:1px;top:390px">Each select_expr indicates a column</div>
<div class="p" style="left:9px;top:405px">In the WHERE expression, you can</div>
<div class="p" style="left:1px;top:420px">SELECT can also be used to retrieve</div>
<div class="p" style="left:5px;top:435px">See also:  Online help select</div>
</div>

<!-- status -->
<div class="a" style="left:0;top:723px;width:1301px;height:2px;background:#c4c1bc"></div>
<div class="a" style="left:0;top:725px;width:1301px;height:19px;background:#f2f1f0"></div>
<div class="t" style="left:2px;top:727px;font-size:12px">Query Completed</div>
<div class="a" style="left:1133px;top:725px;width:150px;height:18px;border-radius:9px;background:#e0dfdd"></div>
<div class="a" style="left:1292px;top:735px;width:9px;height:9px;background:repeating-conic-gradient(#bbb 0 25%,transparent 0 100%) 0 0/3px 3px"></div>
</body></html>
